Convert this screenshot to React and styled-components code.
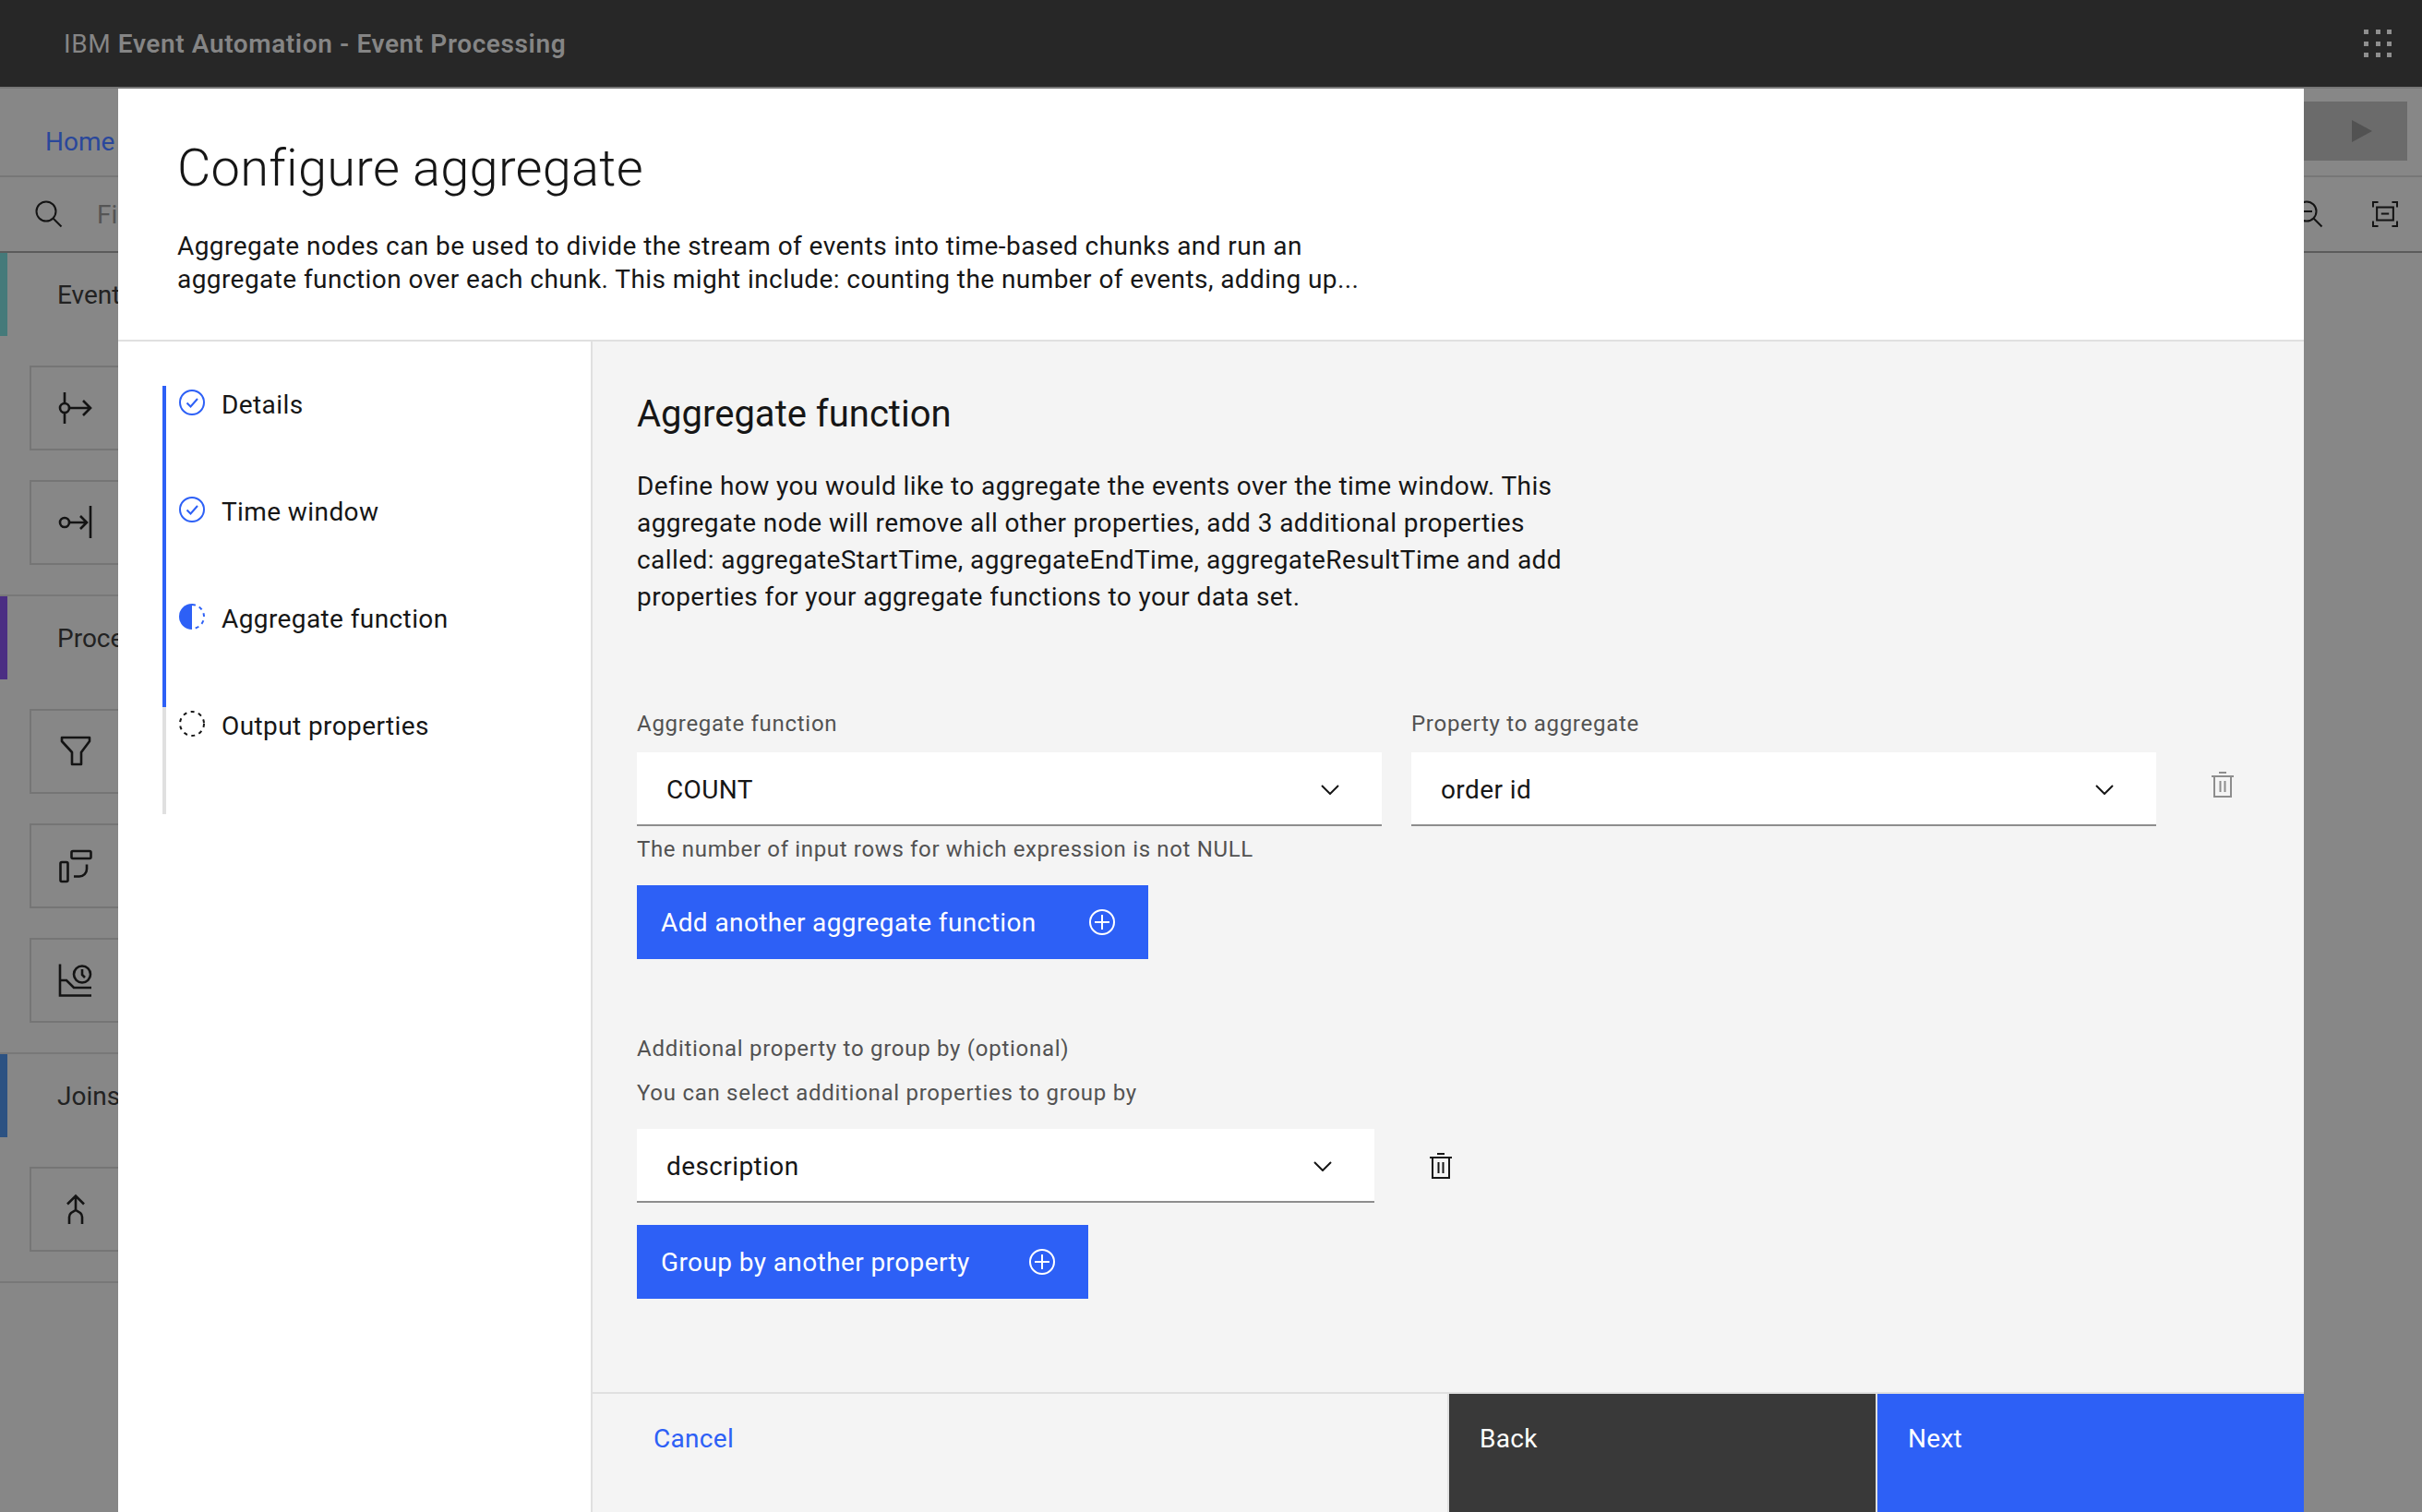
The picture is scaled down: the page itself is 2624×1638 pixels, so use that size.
import styled, { createGlobalStyle } from "styled-components";

const FONT = `"Roboto", "Liberation Sans", sans-serif`;
const BLUE = "#2d60f6";

const GlobalStyle = createGlobalStyle`
  html, body {
    margin: 0;
    height: 100%;
    overflow: hidden;
    background: #878787;
    font-family: ${FONT};
  }
  * { box-sizing: border-box; }
`;

const Page = styled.div`
  position: relative;
  width: 2624px;
  height: 1638px;
  overflow: hidden;
  background: #878787;
`;
const TopBar = styled.header`
  display: flex;
  align-items: center;
  justify-content: space-between;
  height: 96px;
  padding: 0 33px 0 69px;
  background: #272727;
  border-bottom: 2px solid #777;
  color: #858585;
  font-size: 28px;
  letter-spacing: 0.6px;
  b { font-weight: 600; }
`;
const Waffle = styled.div`
  display: grid;
  grid-template-columns: repeat(3, 5px);
  gap: 7.5px;
  span { height: 5px; background: #8f8f8f; }
`;
const Crumbs = styled.div`
  display: flex;
  align-items: center;
  justify-content: space-between;
  height: 96px;
  padding: 0 16px 0 49px;
  border-bottom: 2px solid #777;
`;
const HomeLink = styled.a`
  padding-top: 20px;
  color: #2a479b;
  font-size: 28px;
`;
const RunButton = styled.div`
  display: flex;
  align-items: center;
  justify-content: flex-end;
  width: 200px;
  height: 64px;
  padding-right: 38px;
  background: #6b6b6b;
  margin-top: -2px;
`;
const Toolbar = styled.div`
  display: flex;
  align-items: center;
  justify-content: space-between;
  height: 82px;
  padding: 0 26px 0 38px;
  border-bottom: 2px solid #5c5c5c;
`;
const ToolGroup = styled.div`
  display: flex;
  align-items: center;
  gap: ${({ $gap }) => $gap}px;
  color: #555;
  font-size: 28px;
`;
const Sidebar = styled.aside`
  width: 320px;
`;
const Section = styled.section`
  padding-bottom: 32px;
  border-bottom: 2px solid #787878;
`;
const SectionHead = styled.div`
  display: flex;
  align-items: center;
  height: 90px;
  padding-left: 54px;
  border-left: 8px solid ${({ $accent }) => $accent};
  color: #222;
  font-size: 28px;
`;
const NodeList = styled.div`
  display: flex;
  flex-direction: column;
  gap: 32px;
  margin-top: 32px;
  padding-left: 32px;
`;
const NodeBox = styled.div`
  display: flex;
  align-items: center;
  width: 200px;
  height: 92px;
  padding-left: 28px;
  border: 2px solid #757575;
`;
const NodeIcon = styled.svg`
  width: 40px;
  height: 40px;
  fill: none;
  stroke: #141414;
  stroke-width: 2.6;
`;

const Modal = styled.div`
  position: absolute;
  top: 96px;
  left: 128px;
  right: 128px;
  bottom: 0;
  display: flex;
  flex-direction: column;
  background: #fff;
  color: #161616;
`;
const ModalHead = styled.div`
  height: 274px;
  padding: 50px 0 0 64px;
  border-bottom: 2px solid #e0e0e0;
`;
const Title = styled.h1`
  margin: 0;
  font-size: 56px;
  line-height: 72px;
  font-weight: 300;
  letter-spacing: 0.25px;
`;
const Intro = styled.p`
  margin: 31px 0 0;
  font-size: 28px;
  line-height: 36px;
  letter-spacing: 0.43px;
`;
const ModalBody = styled.div`
  flex: 1;
  display: flex;
  min-height: 0;
`;
const StepNav = styled.nav`
  width: 514px;
  padding: 48px 0 0 48px;
  border-right: 2px solid #e0e0e0;
`;
const Step = styled.div`
  display: flex;
  align-items: flex-start;
  gap: 18px;
  height: 116px;
  padding: 4px 0 0 14px;
  border-left: 4px solid ${({ $done }) => ($done ? BLUE : "#e0e0e0")};
  font-size: 28px;
  line-height: 34px;
  letter-spacing: 0.4px;
`;
const StepIcon = styled.svg`
  flex: none;
  width: 28px;
  height: 28px;
  fill: none;
`;
const Panel = styled.div`
  flex: 1;
  display: flex;
  flex-direction: column;
  background: #f4f4f4;
`;
const PanelMain = styled.div`
  flex: 1;
  padding: 55px 0 0 48px;
`;
const PanelTitle = styled.h2`
  margin: 0;
  font-size: 40px;
  line-height: 48px;
  font-weight: 400;
`;
const Lead = styled.p`
  margin: 34px 0 101px;
  font-size: 28px;
  line-height: 40px;
  letter-spacing: 0.42px;
`;
const FieldRow = styled.div`
  display: flex;
  align-items: flex-start;
  gap: 32px;
`;
const Field = styled.div`
  width: ${({ $width }) => $width}px;
`;
const FieldLabel = styled.div`
  margin: ${({ $top }) => $top || 0}px 0 ${({ $bottom }) => $bottom || 0}px;
  color: #525252;
  font-size: 24px;
  line-height: 32px;
  letter-spacing: 0.72px;
`;
const SelectBox = styled.div`
  display: flex;
  align-items: center;
  justify-content: space-between;
  width: ${({ $width }) => ($width ? `${$width}px` : "100%")};
  height: 80px;
  padding: 2px 46px 0 32px;
  background: #fff;
  border-bottom: 2px solid #8d8d8d;
  font-size: 28px;
  letter-spacing: 0.4px;
`;
const HelperText = styled.div`
  margin-top: 9px;
  color: #525252;
  font-size: 24px;
  line-height: 32px;
  letter-spacing: 0.66px;
`;
const AddButton = styled.button`
  display: flex;
  align-items: center;
  justify-content: space-between;
  width: ${({ $width }) => $width}px;
  height: 80px;
  margin-top: ${({ $top }) => $top}px;
  padding: 0 36px 0 26px;
  border: 0;
  background: ${BLUE};
  color: #fff;
  font: inherit;
  font-size: 28px;
  letter-spacing: 0.4px;
`;
const TrashIcon = styled.svg`
  flex: none;
  width: 24px;
  height: 28px;
  margin-left: 28px;
  margin-top: ${({ $top }) => $top || 0}px;
  fill: none;
  stroke: ${({ $muted }) => ($muted ? "#8d8d8d" : "#161616")};
  stroke-width: 2;
`;
const GroupRow = styled.div`
  display: flex;
  align-items: center;
  gap: 32px;
`;
const Footer = styled.footer`
  display: flex;
  height: 130px;
  border-top: 2px solid #e0e0e0;
`;
const FooterAction = styled.div`
  flex: ${({ $grow }) => ($grow ? 1 : "none")};
  width: ${({ $grow }) => ($grow ? "auto" : "464px")};
  padding: 29px 0 0 ${({ $pad }) => $pad}px;
  border-left: ${({ $grow }) => ($grow ? "0" : "2px solid #e0e0e0")};
  background: ${({ $bg }) => $bg};
  color: ${({ $color }) => $color};
  font-size: 28px;
  line-height: 40px;
  letter-spacing: 0.3px;
`;

function Chevron() {
  return (
    <svg width="20" height="11" viewBox="0 0 20 11" fill="none" stroke="#161616" strokeWidth="2">
      <path d="M1 1l9 9 9-9" />
    </svg>
  );
}

function PlusCircle() {
  return (
    <svg width="28" height="28" viewBox="0 0 28 28" fill="none" stroke="#fff" strokeWidth="2">
      <circle cx="14" cy="14" r="13" />
      <path d="M14 6v16M6 14h16" />
    </svg>
  );
}

function Trash({ muted, top }) {
  return (
    <TrashIcon viewBox="0 0 24 28" $muted={muted} $top={top}>
      <path d="M0 5h24M8 1h8M3 5v22h18V5M9.5 10v12M14.5 10v12" />
    </TrashIcon>
  );
}

function StepStatus({ kind }) {
  if (kind === "done") {
    return (
      <StepIcon viewBox="0 0 28 28" stroke={BLUE} strokeWidth="2">
        <circle cx="14" cy="14" r="13" />
        <path d="M8.5 14.5l4 4 7.5-8.5" />
      </StepIcon>
    );
  }
  if (kind === "current") {
    return (
      <StepIcon viewBox="0 0 28 28">
        <path d="M14 0a14 14 0 0 0 0 28z" fill={BLUE} />
        <path d="M14 1a13 13 0 0 1 0 26" stroke={BLUE} strokeWidth="2" strokeDasharray="4 4.2" />
      </StepIcon>
    );
  }
  return (
    <StepIcon viewBox="0 0 28 28" stroke="#161616" strokeWidth="2">
      <circle cx="14" cy="14" r="13" strokeDasharray="4 4.5" />
    </StepIcon>
  );
}

const NODE_PATHS = [
  <>
    <path d="M8 3v12M8 25v12M13 20h23M28 12l8 8-8 8" />
    <circle cx="8" cy="20" r="5" />
  </>,
  <>
    <circle cx="8" cy="20" r="5" />
    <path d="M13 20h19M25 13l7 7-7 7M36 2v35" />
  </>,
  <path d="M5 5h30v4L26 21v13H16V21L5 9z" strokeLinejoin="round" />,
  <>
    <rect x="3.5" y="16" width="8" height="21" rx="1.5" />
    <rect x="15.5" y="4" width="21" height="8" rx="1.5" />
    <path d="M18 31.5h6a8 8 0 0 0 8-8v-5" />
  </>,
  <>
    <path d="M3 2.5v34h34M3 20h7l8 8h19" />
    <circle cx="27" cy="13.5" r="9" />
    <path d="M27 8v6l3 3" />
  </>,
  <path d="M11 14.5l9-9 9 9M20 6v16M13 36v-7.5a6 6 0 0 1 2-4.5l5-3 5 3a6 6 0 0 1 2 4.5V36" />,
];

function NodeTile({ index }) {
  return (
    <NodeBox>
      <NodeIcon viewBox="0 0 40 40">{NODE_PATHS[index]}</NodeIcon>
    </NodeBox>
  );
}

const STEPS = [
  { label: "Details", kind: "done", done: true },
  { label: "Time window", kind: "done", done: true },
  { label: "Aggregate function", kind: "current", done: true },
  { label: "Output properties", kind: "todo" },
];

export default function App() {
  return (
    <Page>
      <GlobalStyle />
      <TopBar>
        <div>
          IBM <b>Event Automation - Event Processing</b>
        </div>
        <Waffle>
          {Array.from({ length: 9 }, (_, i) => (
            <span key={i} />
          ))}
        </Waffle>
      </TopBar>

      <Crumbs>
        <HomeLink>Home</HomeLink>
        <RunButton>
          <svg width="22" height="24" viewBox="0 0 22 24">
            <path d="M0 0l22 12L0 24z" fill="#525252" />
          </svg>
        </RunButton>
      </Crumbs>

      <Toolbar>
        <ToolGroup $gap={37}>
          <svg width="30" height="30" viewBox="0 0 30 30" fill="none" stroke="#141414" strokeWidth="2">
            <circle cx="12" cy="12" r="10.5" />
            <path d="M19.5 19.5L28.5 28.5" />
          </svg>
          Find
        </ToolGroup>
        <ToolGroup $gap={53}>
          <svg width="30" height="30" viewBox="0 0 30 30" fill="none" stroke="#141414" strokeWidth="2">
            <circle cx="12" cy="12" r="10.5" />
            <path d="M19.5 19.5L28.5 28.5M6 12h12" />
          </svg>
          <svg width="28" height="28" viewBox="0 0 30 30" fill="none" stroke="#141414" strokeWidth="2.2">
            <path d="M1 7V1h6M23 1h6v6M29 23v6h-6M7 29H1v-6" />
            <rect x="5.5" y="7" width="19" height="15" />
            <path d="M10.5 14.5h9" />
          </svg>
        </ToolGroup>
      </Toolbar>

      <Sidebar>
        <Section>
          <SectionHead $accent="#457a7a">Event source</SectionHead>
          <NodeList>
            <NodeTile index={0} />
            <NodeTile index={1} />
          </NodeList>
        </Section>
        <Section>
          <SectionHead $accent="#4b2e83">Processors</SectionHead>
          <NodeList>
            <NodeTile index={2} />
            <NodeTile index={3} />
            <NodeTile index={4} />
          </NodeList>
        </Section>
        <Section>
          <SectionHead $accent="#2c5282">Joins</SectionHead>
          <NodeList>
            <NodeTile index={5} />
          </NodeList>
        </Section>
      </Sidebar>

      <Modal>
        <ModalHead>
          <Title>Configure aggregate</Title>
          <Intro>
            Aggregate nodes can be used to divide the stream of events into time-based chunks and run an
            <br />
            aggregate function over each chunk. This might include: counting the number of events, adding up...
          </Intro>
        </ModalHead>

        <ModalBody>
          <StepNav>
            {STEPS.map((step) => (
              <Step key={step.label} $done={step.done}>
                <StepStatus kind={step.kind} />
                {step.label}
              </Step>
            ))}
          </StepNav>

          <Panel>
            <PanelMain>
              <PanelTitle>Aggregate function</PanelTitle>
              <Lead>
                Define how you would like to aggregate the events over the time window. This
                <br />
                aggregate node will remove all other properties, add 3 additional properties
                <br />
                called: aggregateStartTime, aggregateEndTime, aggregateResultTime and add
                <br />
                properties for your aggregate functions to your data set.
              </Lead>

              <FieldRow>
                <Field $width={807}>
                  <FieldLabel $bottom={15}>Aggregate function</FieldLabel>
                  <SelectBox>
                    COUNT
                    <Chevron />
                  </SelectBox>
                  <HelperText>The number of input rows for which expression is not NULL</HelperText>
                </Field>
                <Field $width={807}>
                  <FieldLabel $bottom={15}>Property to aggregate</FieldLabel>
                  <SelectBox>
                    order id
                    <Chevron />
                  </SelectBox>
                </Field>
                <Trash muted top={68} />
              </FieldRow>
              <AddButton $width={554} $top={23}>
                Add another aggregate function
                <PlusCircle />
              </AddButton>

              <FieldLabel $top={81}>Additional property to group by (optional)</FieldLabel>
              <FieldLabel $top={16} $bottom={23}>
                You can select additional properties to group by
              </FieldLabel>
              <GroupRow>
                <SelectBox $width={799}>
                  description
                  <Chevron />
                </SelectBox>
                <Trash />
              </GroupRow>
              <AddButton $width={489} $top={24}>
                Group by another property
                <PlusCircle />
              </AddButton>
            </PanelMain>

            <Footer>
              <FooterAction $grow $pad={66} $color={BLUE}>
                Cancel
              </FooterAction>
              <FooterAction $pad={33} $bg="#393939" $color="#fff">
                Back
              </FooterAction>
              <FooterAction $pad={33} $bg={BLUE} $color="#fff">
                Next
              </FooterAction>
            </Footer>
          </Panel>
        </ModalBody>
      </Modal>
    </Page>
  );
}
